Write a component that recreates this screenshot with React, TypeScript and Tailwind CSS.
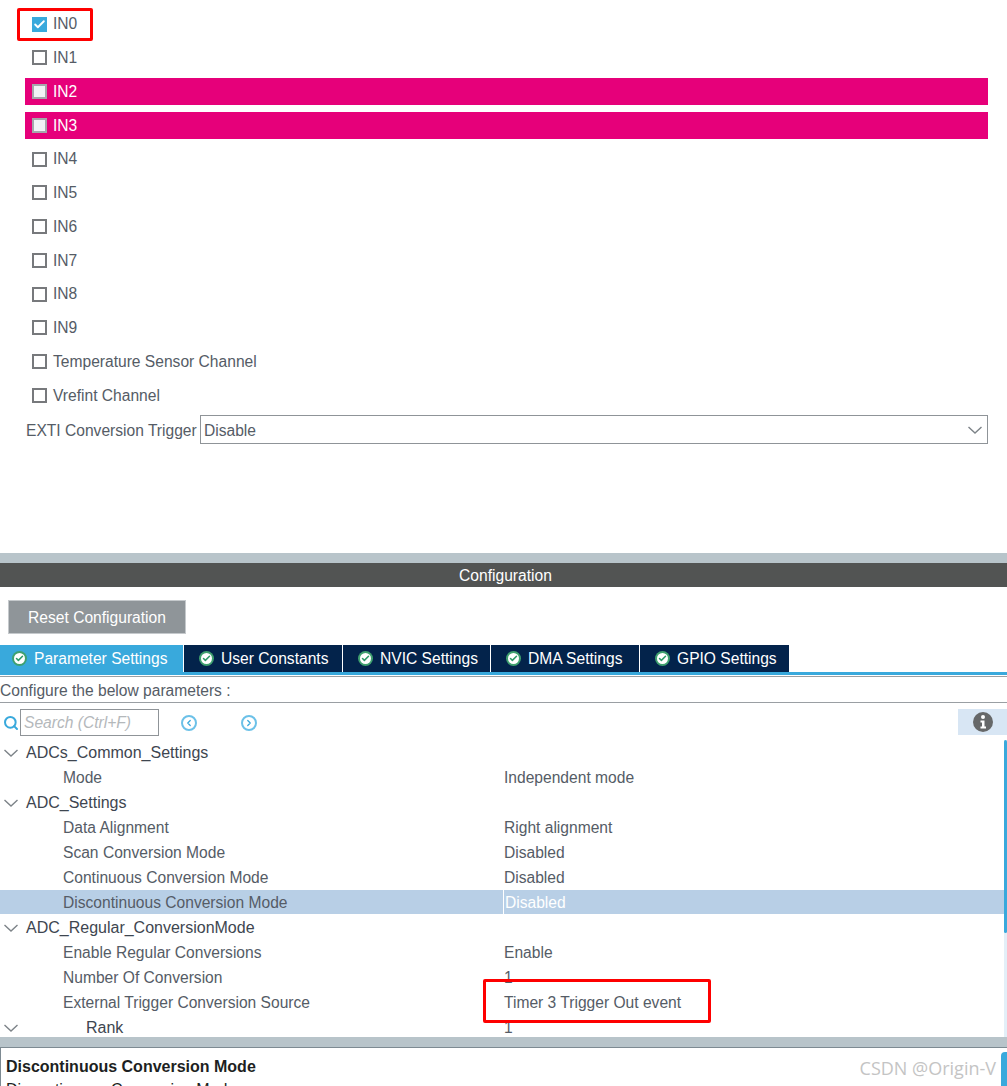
import { Check, Search, ChevronLeft, ChevronRight } from "lucide-react";

const channels = [
  { label: "IN0", checked: true },
  { label: "IN1" },
  { label: "IN2", conflict: true },
  { label: "IN3", conflict: true },
  { label: "IN4" },
  { label: "IN5" },
  { label: "IN6" },
  { label: "IN7" },
  { label: "IN8" },
  { label: "IN9" },
  { label: "Temperature Sensor Channel" },
  { label: "Vrefint Channel" },
];

const tabs = [
  { label: "Parameter Settings", width: "w-[184px]", active: true },
  { label: "User Constants", width: "w-[159px]" },
  { label: "NVIC Settings", width: "w-[148px]" },
  { label: "DMA Settings", width: "w-[149px]" },
  { label: "GPIO Settings", width: "w-[150px]" },
];

type Row = { label: string; value?: string; indent: string; group?: boolean; selected?: boolean };

const rows: Row[] = [
  { label: "ADCs_Common_Settings", indent: "pl-[26px]", group: true },
  { label: "Mode", value: "Independent mode", indent: "pl-[63px]" },
  { label: "ADC_Settings", indent: "pl-[26px]", group: true },
  { label: "Data Alignment", value: "Right alignment", indent: "pl-[63px]" },
  { label: "Scan Conversion Mode", value: "Disabled", indent: "pl-[63px]" },
  { label: "Continuous Conversion Mode", value: "Disabled", indent: "pl-[63px]" },
  { label: "Discontinuous Conversion Mode", value: "Disabled", indent: "pl-[63px]", selected: true },
  { label: "ADC_Regular_ConversionMode", indent: "pl-[26px]", group: true },
  { label: "Enable Regular Conversions", value: "Enable", indent: "pl-[63px]" },
  { label: "Number Of Conversion", value: "1", indent: "pl-[63px]" },
  { label: "External Trigger Conversion Source", value: "Timer 3 Trigger Out event", indent: "pl-[63px]" },
  { label: "Rank", value: "1", indent: "pl-[86px]", group: true },
];

const TabCheck = () => (
  <span className="flex h-[15px] w-[15px] shrink-0 items-center justify-center rounded-full bg-[#3fa06f]">
    <span className="flex h-[11px] w-[11px] items-center justify-center rounded-full bg-white">
      <Check className="h-[9px] w-[9px] text-[#2f9a68]" strokeWidth={4} />
    </span>
  </span>
);

const Chevron = ({ className }: { className: string }) => (
  <svg className={className} viewBox="0 0 14 8" fill="none" stroke="#7d8388" strokeWidth="1.4">
    <path d="M0.5 1 L7 7 L13.5 1" />
  </svg>
);

export default function App() {
  return (
    <div className="relative h-[1086px] w-[1007px] overflow-hidden bg-white font-['Liberation_Sans',Arial,sans-serif] text-[15.6px] text-[#555c66]">
      {/* Channel list */}
      <div className="h-[553px] pl-[25px] pr-[19px] pt-[10.5px]">
        <div className="flex flex-col gap-[6.75px]">
          {channels.map((ch) => (
            <div
              key={ch.label}
              className={`flex h-[27px] items-center pl-[7px] ${ch.conflict ? "bg-[#e6007a] text-white" : ""}`}
            >
              {ch.checked ? (
                <span className="flex h-[15px] w-[15px] items-center justify-center bg-[#39a9dc]">
                  <Check className="h-[13px] w-[13px] text-white" strokeWidth={3.5} />
                </span>
              ) : (
                <span
                  className={`h-[15px] w-[15px] border-2 ${ch.conflict ? "border-[#a5a8ac] bg-[#f1f3f6]" : "border-[#77797c] bg-white"}`}
                />
              )}
              <span className="ml-[6px]">{ch.label}</span>
            </div>
          ))}
        </div>
        <div className="mt-[6.25px] flex items-center pl-px">
          <span className="w-[174px] whitespace-nowrap pt-[2px]">EXTI Conversion Trigger</span>
          <div className="flex h-[29px] flex-1 items-center justify-between border border-[#8f9498] pl-[3px] pr-[5px]">
            <span className="pt-[2px]">Disable</span>
            <Chevron className="h-[8px] w-[14px]" />
          </div>
        </div>
      </div>

      {/* Configuration panel */}
      <div className="h-[10px] bg-[#b8c4ca]" />
      <div className="flex h-[24px] items-center justify-center bg-[#525453] pl-[4px] pt-px text-white">Configuration</div>
      <div className="px-2 pt-[13px]">
        <button className="flex h-[34px] w-[178px] items-center justify-center border border-[#c5c9cc] bg-[#8f9599] pt-px text-white">
          Reset Configuration
        </button>
      </div>

      <div className="mt-[11px] flex h-[30px] items-start border-b-[3px] border-[#39a9dc]">
        {tabs.map((tab) => (
          <div
            key={tab.label}
            className={`flex h-[27px] items-center gap-[7px] border-r border-white ${tab.width} ${tab.active ? "bg-[#39a9dc] pl-[12px] text-white" : "bg-[#03234b] pl-[15px] text-white"}`}
          >
            <TabCheck />
            <span className="whitespace-nowrap">{tab.label}</span>
          </div>
        ))}
      </div>

      <div className="mt-px flex h-[27px] items-center border-y border-[#9a9fa3] pt-[2px]">Configure the below parameters :</div>

      <div className="flex h-[37px] items-center pl-[3px] pt-[2px]">
        <Search className="h-[16px] w-[16px] text-[#39a9dc]" strokeWidth={3} />
        <div className="ml-px flex h-[27px] w-[139px] items-center border border-[#8f9498] pl-[3px] italic text-[#b4b8bb]">
          Search (Ctrl+F)
        </div>
        <span className="ml-[22px] flex h-[16px] w-[16px] items-center justify-center rounded-full border-2 border-[#6cc1e8]">
          <ChevronLeft className="h-[10px] w-[10px] text-[#39a9dc]" strokeWidth={3} />
        </span>
        <span className="ml-[44px] flex h-[16px] w-[16px] items-center justify-center rounded-full border-2 border-[#6cc1e8]">
          <ChevronRight className="h-[10px] w-[10px] text-[#39a9dc]" strokeWidth={3} />
        </span>
        <div className="ml-auto -mt-[2px] flex h-[26px] w-[49px] items-center justify-center bg-[#d8e6f4]">
          <svg className="h-[20px] w-[20px]" viewBox="0 0 20 20">
            <circle cx="10" cy="10" r="10" fill="#666869" />
            <circle cx="10" cy="5" r="2" fill="#fff" />
            <path d="M7.5 8.5 H11.5 V14.5 H13 V16.5 H7.5 V14.5 H9 V10.5 H7.5 Z" fill="#fff" />
          </svg>
        </div>
      </div>

      {/* Parameter tree */}
      <div className="relative h-[297px] overflow-hidden pr-[3px]">
        {rows.map((row) => (
          <div
            key={row.label}
            className={`relative flex items-center ${row.selected ? "h-[24px] mb-px bg-[#b8cfe6]" : "h-[25px]"}`}
          >
            {row.group && <Chevron className="absolute left-[4px] top-[9px] h-[8px] w-[14px]" />}
            <span className={`w-[503px] shrink-0 whitespace-nowrap ${row.indent} ${row.group ? "text-base text-[#3e4650]" : ""} ${row.selected ? "pt-px" : ""}`}>
              {row.label}
            </span>
            {row.value && (
              <span className={`h-full flex-1 pl-px leading-[25px] ${row.selected ? "border-l border-white text-white" : ""}`}>
                {row.value}
              </span>
            )}
          </div>
        ))}
        <div className="absolute right-0 top-0 h-full w-[3px] bg-[#e3eff8]">
          <div className="h-[193px] rounded-full bg-[#39a9dc]" />
        </div>
      </div>

      <div className="h-[11px] border-b border-[#7d8a92] bg-[#b8c4ca]" />
      <div className="border-l border-[#7d8a92] pl-[5px] pt-[7px] text-base">
        <div className="font-bold leading-[24px] text-[#1d1f22]">Discontinuous Conversion Mode</div>
        <div className="leading-[22px] text-[#1d1f22]">Discontinuous Conversion Mode</div>
      </div>
      <div className="absolute bottom-0 right-0 h-[34px] w-[6px] rounded-tl bg-[#39a9dc]" />

      {/* Annotations */}
      <div className="absolute left-[17px] top-[8px] h-[33px] w-[76px] rounded-[2px] border-[3px] border-[#fe0000]" />
      <div className="absolute left-[483px] top-[979px] h-[44px] w-[228px] rounded-[2px] border-[3px] border-[#fe0000]" />
      <div className="absolute right-[11px] top-[1055px] font-['Open_Sans',sans-serif] text-[18px] leading-[26px] text-[#c4c4c4]">
        CSDN @Origin-V
      </div>
    </div>
  );
}
